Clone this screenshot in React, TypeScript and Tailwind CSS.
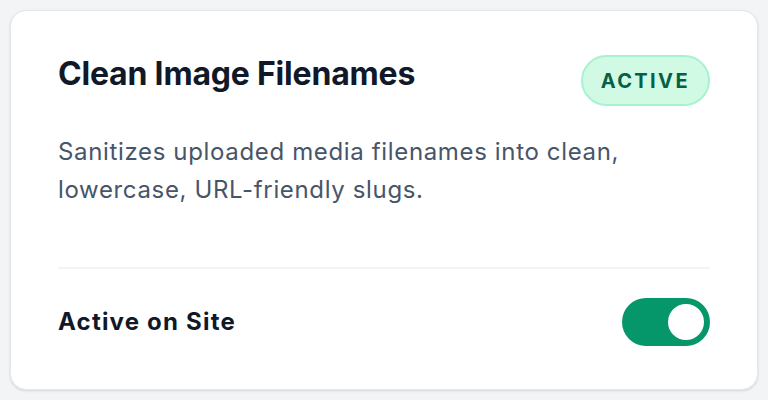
import React from "react";

export default function App() {
  return (
    <div className="w-[768px] h-[400px] bg-[#f3f4f6] p-[10px]" style={{ fontFamily: "Inter, 'Noto Sans', sans-serif" }}>
      <div className="h-[380px] bg-white rounded-[16px] border border-[#e5e7eb] shadow-sm px-[47px] pt-[43px]">
        <div className="flex justify-between items-start">
          <h2 className="text-[32px] leading-[40px] font-bold text-[#111827] tracking-[-0.2px]">Clean Image Filenames</h2>
          <span className="mt-[1px] h-[51px] px-[18px] flex items-center rounded-full bg-[#d1fae5] border-2 border-[#a7f3d0] text-[#065f46] text-[20px] font-bold tracking-[0.12em]">
            ACTIVE
          </span>
        </div>
        <p className="mt-[27px] text-[24px] leading-[38px] tracking-[0.65px] text-[#475569]">
          Sanitizes uploaded media filenames into clean,
          <br />
          lowercase, URL-friendly slugs.
        </p>
        <div className="mt-[58px] h-[2px] bg-[#f3f4f6]" />
        <div className="mt-[29px] flex items-center justify-between">
          <span className="text-[24px] font-bold tracking-[1.2px] text-[#111827]">Active on Site</span>
          <button className="w-[88px] h-[48px] rounded-full bg-[#059669] p-[6px] flex justify-end">
            <span className="w-[36px] h-[36px] rounded-full bg-white block" />
          </button>
        </div>
      </div>
    </div>
  );
}
